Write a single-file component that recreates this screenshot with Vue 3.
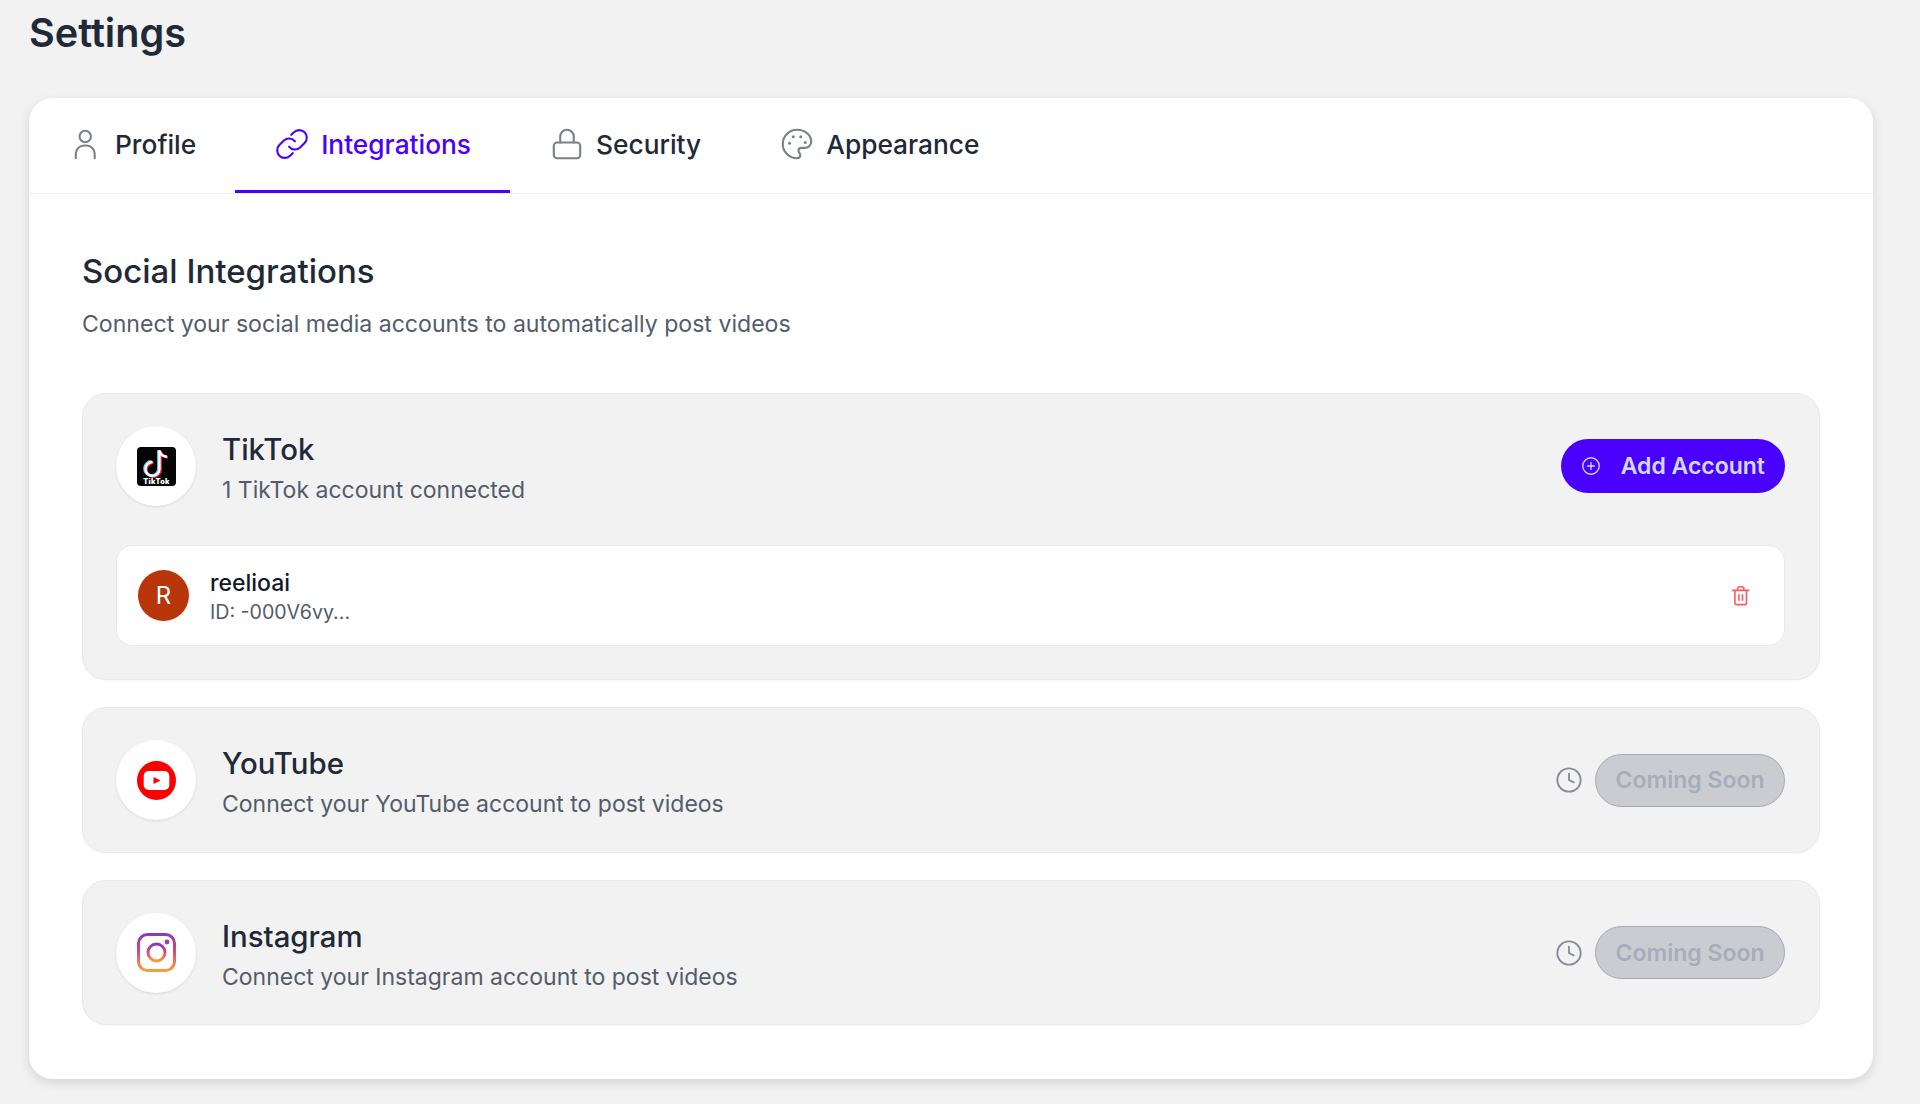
<script setup>
const tabs = [
  { id: 'profile', label: 'Profile' },
  { id: 'integrations', label: 'Integrations', active: true },
  { id: 'security', label: 'Security' },
  { id: 'appearance', label: 'Appearance' }
]
</script>

<template>
  <main class="page">
    <h1 class="title">Settings</h1>
    <section class="card">
      <nav class="tabs">
        <a v-for="t in tabs" :key="t.id" class="tab" :class="{ active: t.active }">
          <svg class="tab-icon" viewBox="0 0 24 24" fill="none" stroke="currentColor" stroke-width="1.4" stroke-linecap="round" stroke-linejoin="round">
            <template v-if="t.id === 'profile'">
              <circle cx="11.5" cy="7" r="3.8" />
              <path d="M5.2 21.5v-3a5.5 5.5 0 0 1 5.5-5.5h1.6a5.5 5.5 0 0 1 5.5 5.5v3" />
            </template>
            <template v-else-if="t.id === 'integrations'">
              <path d="M10 13.8a5 5 0 0 0 7.4.5l3-3a5 5 0 0 0-7.1-7.1l-1.8 1.7" />
              <path d="M14 10.2a5 5 0 0 0-7.4-.5l-3 3a5 5 0 0 0 7.1 7.1l1.8-1.7" />
            </template>
            <template v-else-if="t.id === 'security'">
              <rect x="3.2" y="11" width="17.6" height="10.5" rx="2.2" />
              <path d="M7.5 11V7a4.5 4.5 0 0 1 9 0v4" />
            </template>
            <template v-else>
              <path d="M12 2.5a9.5 9.5 0 0 0 0 19c1.4 0 2.2-1 2.2-2.1 0-.6-.2-1-.6-1.5-.4-.4-.6-.9-.6-1.4 0-1.1.9-1.9 2-1.9h2.3c2.4 0 4.2-1.9 4.2-4.2 0-4.4-4.2-7.9-9.5-7.9z" />
              <circle cx="7" cy="11.5" r="1" fill="currentColor" stroke="none" />
              <circle cx="9.5" cy="7.2" r="1" fill="currentColor" stroke="none" />
              <circle cx="14.5" cy="7.2" r="1" fill="currentColor" stroke="none" />
              <circle cx="17.5" cy="11" r="1" fill="currentColor" stroke="none" />
            </template>
          </svg>
          <span>{{ t.label }}</span>
        </a>
      </nav>

      <div class="content">
        <h2 class="heading">Social Integrations</h2>
        <p class="sub">Connect your social media accounts to automatically post videos</p>

        <div class="platform tiktok">
          <div class="row">
            <div class="logo">
              <svg width="39" height="39" viewBox="0 0 39 39">
                <rect width="39" height="39" rx="4" fill="#050505" />
                <g fill="none">
                  <g stroke="#ee1d52" stroke-width="2.8" transform="translate(1 .7)">
                    <path d="M22.5 3.5v18.5a7 7 0 1 1-7-7" />
                    <path d="M22.5 3.5c.6 3.6 3.4 5.8 7.5 6.2" />
                  </g>
                  <g stroke="#69c9d0" stroke-width="2.8" transform="translate(-1 -.5)">
                    <path d="M22.5 3.5v18.5a7 7 0 1 1-7-7" />
                  </g>
                  <g stroke="#fff" stroke-width="2.4">
                    <path d="M22.5 3.5v18.5a7 7 0 1 1-7-7" />
                    <path d="M22.5 3.5c.6 3.6 3.4 5.8 7.5 6.2" />
                  </g>
                </g>
                <text x="19.5" y="37" text-anchor="middle" class="tk-text">TikTok</text>
              </svg>
            </div>
            <div class="info">
              <h3 class="name">TikTok</h3>
              <p class="desc">1 TikTok account connected</p>
            </div>
            <button class="btn-add">
              <svg class="plus" viewBox="0 0 24 24" fill="none" stroke="currentColor" stroke-width="1.8" stroke-linecap="round">
                <circle cx="12" cy="12" r="11" />
                <path d="M12 7.5v9M7.5 12h9" />
              </svg>
              <span>Add Account</span>
            </button>
          </div>
          <div class="account">
            <div class="avatar">R</div>
            <div class="acc-info">
              <div class="acc-name">reelioai</div>
              <div class="acc-id">ID: -000V6vy...</div>
            </div>
            <svg class="trash" viewBox="0 0 24 24" fill="none" stroke="currentColor" stroke-width="1.8" stroke-linecap="round" stroke-linejoin="round">
              <path d="M3 6h18M5.5 6v14a2 2 0 0 0 2 2h9a2 2 0 0 0 2-2V6M8.5 6V4a2 2 0 0 1 2-2h3a2 2 0 0 1 2 2v2M10 11v6M14 11v6" />
            </svg>
          </div>
        </div>

        <div class="platform soon">
          <div class="row">
            <div class="logo">
              <svg width="39" height="39" viewBox="0 0 39 39">
                <circle cx="19.5" cy="19.5" r="19.5" fill="#ff0000" />
                <rect x="6.7" y="10" width="25.6" height="19" rx="5" fill="#fff" />
                <path d="M16.5 16l7 3.5-7 3.5z" fill="#ff0000" />
              </svg>
            </div>
            <div class="info">
              <h3 class="name">YouTube</h3>
              <p class="desc">Connect your YouTube account to post videos</p>
            </div>
            <svg class="clock" viewBox="0 0 24 24" fill="none" stroke="currentColor" stroke-width="1.6" stroke-linecap="round" stroke-linejoin="round">
              <circle cx="12" cy="12" r="10" />
              <path d="M12 6.5V12l4 2" />
            </svg>
            <button class="btn-soon">Coming Soon</button>
          </div>
        </div>

        <div class="platform soon">
          <div class="row">
            <div class="logo">
              <svg width="39" height="39" viewBox="0 0 39 39">
                <defs>
                  <linearGradient id="ig" x1="0" y1="0" x2="0" y2="1">
                    <stop offset="0" stop-color="#8a3ab9" />
                    <stop offset=".45" stop-color="#d6457c" />
                    <stop offset="1" stop-color="#f5a040" />
                  </linearGradient>
                </defs>
                <rect x="1.5" y="1.5" width="36" height="36" rx="9" fill="none" stroke="url(#ig)" stroke-width="3" />
                <circle cx="19.5" cy="19.5" r="8.5" fill="none" stroke="url(#ig)" stroke-width="3" />
                <circle cx="30" cy="9" r="2.4" fill="#a33aa5" />
              </svg>
            </div>
            <div class="info">
              <h3 class="name">Instagram</h3>
              <p class="desc">Connect your Instagram account to post videos</p>
            </div>
            <svg class="clock" viewBox="0 0 24 24" fill="none" stroke="currentColor" stroke-width="1.6" stroke-linecap="round" stroke-linejoin="round">
              <circle cx="12" cy="12" r="10" />
              <path d="M12 6.5V12l4 2" />
            </svg>
            <button class="btn-soon">Coming Soon</button>
          </div>
        </div>
      </div>
    </section>
  </main>
</template>

<style>
html, body { margin: 0; background: #f2f2f2; }
</style>

<style scoped>
.page {
  box-sizing: border-box;
  height: 1104px;
  padding: 0 47px 0 29px;
  font-family: Inter, "Liberation Sans", sans-serif;
  color: #1f2937;
  overflow: hidden;
}
.title {
  margin: 0;
  height: 98px;
  padding-top: 9px;
  box-sizing: border-box;
  font-size: 39.6px;
  line-height: 48px;
  font-weight: 600;
}
.card {
  background: #fff;
  border-radius: 24px;
  box-shadow: 0 4px 12px rgba(0, 0, 0, 0.12);
  height: 981px;
}
.tabs {
  display: flex;
  height: 96px;
  box-sizing: border-box;
  border-bottom: 1px solid #eceef0;
}
.tab {
  display: flex;
  align-items: center;
  gap: 11px;
  padding: 0 39px;
  height: 95px;
  box-sizing: border-box;
  font-size: 26.3px;
  font-weight: 500;
  color: #1f2937;
  border-bottom: 3px solid transparent;
}
.tab.active { color: #4a00ff; border-bottom-color: #4a00ff; }
.tab-icon { width: 36px; height: 36px; color: #7a808a; flex: none; }
.tab.active .tab-icon { color: #4a00ff; }
.content { padding: 52.5px 53px 0; }
.heading {
  margin: 0;
  font-size: 33px;
  line-height: 48px;
  font-weight: 500;
}
.sub {
  margin: 12.5px 0 0;
  font-size: 23.1px;
  line-height: 34px;
  color: #525c6b;
}
.platform {
  box-sizing: border-box;
  background: #f2f2f2;
  border: 1px solid #e7e8ea;
  border-radius: 24px;
  box-shadow: 0 1px 2px rgba(0, 0, 0, 0.03);
  padding: 32px 34px 32px 33px;
  margin-bottom: 27px;
}
.tiktok { margin-top: 52px; height: 287px; }
.soon { height: 145.5px; }
.row { display: flex; align-items: center; height: 80px; }
.logo {
  width: 80px;
  height: 80px;
  border-radius: 50%;
  background: #fff;
  box-shadow: 0 1px 3px rgba(0, 0, 0, 0.1);
  display: flex;
  align-items: center;
  justify-content: center;
  flex: none;
}
.tk-text { font: 900 7.2px Inter, sans-serif; fill: #fff; letter-spacing: 0.4px; }
.info { flex: 1; margin-left: 26px; padding-top: 5px; }
.name { margin: 0; font-size: 29.4px; line-height: 40px; font-weight: 500; }
.desc { margin: 3px 0 0; font-size: 23px; line-height: 34px; color: #525c6b; }
.btn-add {
  display: flex;
  align-items: center;
  gap: 21px;
  height: 54px;
  padding: 0 20px 0 21px;
  border: 0;
  border-radius: 27px;
  background: #4a00ff;
  color: #d1dbff;
  font: 600 23px Inter, sans-serif;
}
.plus { width: 18px; height: 18px; }
.account {
  margin-top: 39px;
  height: 101px;
  box-sizing: border-box;
  display: flex;
  align-items: center;
  background: #fff;
  border: 1px solid #e7e8ea;
  border-radius: 16px;
  padding: 0 33px 0 21px;
}
.avatar {
  width: 51px;
  height: 51px;
  border-radius: 50%;
  background: #b9360a;
  color: #fff;
  display: flex;
  align-items: center;
  justify-content: center;
  font-size: 24px;
  flex: none;
}
.acc-info { flex: 1; margin-left: 21px; padding-top: 3px; }
.acc-name { font-size: 23px; line-height: 30px; font-weight: 500; color: #111827; }
.acc-id { font-size: 19.6px; line-height: 29px; color: #525c6b; }
.trash { width: 21.4px; height: 21.4px; color: #f75c5c; flex: none; }
.clock { width: 28px; height: 28px; color: #868b95; margin-right: 12px; flex: none; }
.btn-soon {
  box-sizing: border-box;
  width: 190px;
  height: 53px;
  border: 1px solid #a6a9b1;
  border-radius: 27px;
  background: #cbccd1;
  color: #a6adbb;
  font: 600 23px Inter, sans-serif;
  padding: 0;
}
</style>
